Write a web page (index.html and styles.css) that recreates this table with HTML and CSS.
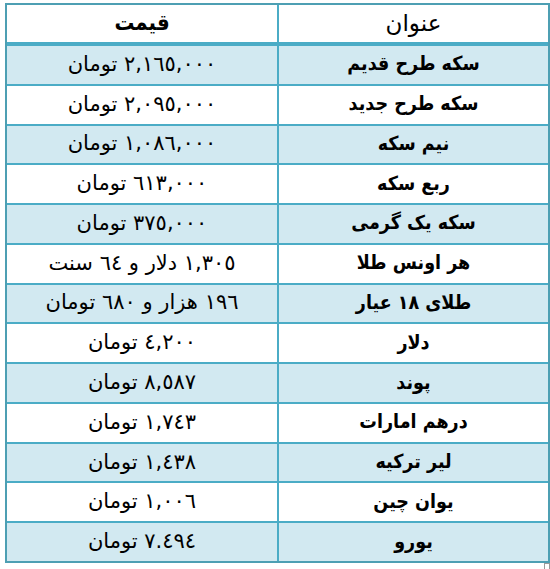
FILE: index.html
```html
<!DOCTYPE html>
<html lang="fa" dir="rtl">
<head>
<meta charset="utf-8">
<link rel="stylesheet" href="styles.css">
</head>
<body>
<div class="table">
  <div class="cell head">عنوان</div><div class="cell head price">قیمت</div>
  <div class="cell t b">سکه طرح قدیم</div><div class="cell p b">٢,١٦٥,٠٠٠ تومان</div>
  <div class="cell t">سکه طرح جدید</div><div class="cell p">٢,٠٩٥,٠٠٠ تومان</div>
  <div class="cell t b">نیم سکه</div><div class="cell p b">١,٠٨٦,٠٠٠ تومان</div>
  <div class="cell t">ربع سکه</div><div class="cell p">٦١٣,٠٠٠ تومان</div>
  <div class="cell t b">سکه یک گرمی</div><div class="cell p b">٣٧٥,٠٠٠ تومان</div>
  <div class="cell t">هر اونس طلا</div><div class="cell p">١,٣٠٥ دلار و ٦٤ سنت</div>
  <div class="cell t b">طلای ١٨ عیار</div><div class="cell p b">١٩٦ هزار و ٦٨٠ تومان</div>
  <div class="cell t">دلار</div><div class="cell p">٤,٢٠٠ تومان</div>
  <div class="cell t b">پوند</div><div class="cell p b">٨,٥٨٧ تومان</div>
  <div class="cell t">درهم امارات</div><div class="cell p">١,٧٤٣ تومان</div>
  <div class="cell t b">لیر ترکیه</div><div class="cell p b">١,٤٣٨ تومان</div>
  <div class="cell t">یوان چین</div><div class="cell p">١,٠٠٦ تومان</div>
  <div class="cell t b">یورو</div><div class="cell p b">٧.٤٩٤ تومان</div>
</div>
<div class="mark"></div>
</body>
</html>
```
FILE: styles.css
```css
html, body {
  margin: 0;
  padding: 0;
  background: #ffffff;
}
body {
  font-family: "DejaVu Sans", "Liberation Sans", sans-serif;
  color: #000;
  direction: rtl;
}
.table {
  margin: 3px 0 0 2px;
  width: 541px;
  border: 2px solid #4d9fb3;
  background: #4bacc6;
  display: grid;
  grid-template-columns: 269px 270px;
  grid-template-rows: 39px repeat(13, 37.77px);
  column-gap: 2px;
  row-gap: 2px;
}
.cell {
  display: flex;
  align-items: center;
  justify-content: center;
  background: #ffffff;
  white-space: nowrap;
  padding-bottom: 2px;
}
.head {
  margin-bottom: 2px;
  font-size: 23px;
}
.head.price {
  font-weight: bold;
  font-size: 22px;
  font-family: "DejaVu Sans Condensed", "DejaVu Sans", sans-serif;
}
.t {
  font-family: "DejaVu Sans Condensed", "DejaVu Sans", sans-serif;
  font-stretch: condensed;
  font-weight: bold;
  font-size: 19.5px;
}
.p {
  font-size: 21px;
}
.b {
  background: #d2e9f1;
}
.mark {
  margin: 0 0 0 2px;
  width: 4px;
  height: 5px;
  border: 1px solid #9a9a9a;
}
```
